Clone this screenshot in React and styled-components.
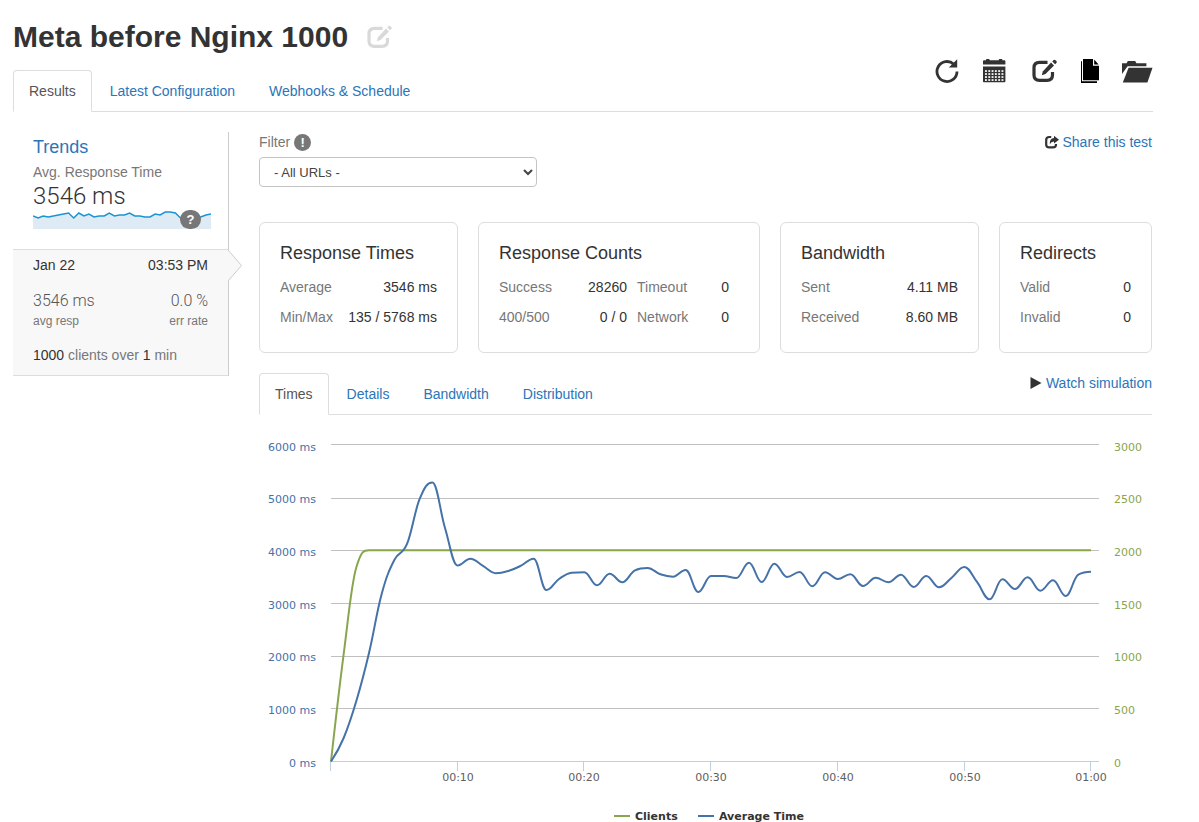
import React from "react";
import styled, { createGlobalStyle } from "styled-components";

const GlobalStyle = createGlobalStyle`
  *, *::before, *::after { box-sizing: border-box; }
  body {
    margin: 0;
    background: #fff;
    color: #333;
    font: 14px/20px "Liberation Sans", Arial, sans-serif;
  }
  h1, h2, h3, p { margin: 0; }
  svg { display: block; }
`;

const Page = styled.div`
  padding: 20px 46px 0 13px;
`;

const Header = styled.header`
  display: flex;
  justify-content: space-between;
  align-items: flex-end;
  border-bottom: 1px solid #ddd;
`;

const TitleRow = styled.div`
  display: flex;
  align-items: center;
  gap: 19px;
  margin-bottom: 17px;
`;

const Title = styled.h1`
  font-size: 30px;
  line-height: 33px;
  font-weight: 700;
`;

const IconButton = styled.button`
  display: block;
  padding: 0;
  border: 0;
  background: none;
  color: ${(p) => p.$color || "#333"};
  cursor: pointer;
`;

const Toolbar = styled.div`
  display: flex;
  gap: 23px;
  padding-bottom: 28px;
`;

const Tabs = styled.nav`
  display: flex;
  gap: 2px;
  margin-bottom: -1px;
`;

const Tab = styled.a`
  padding: 10px 15px;
  border: 1px solid ${(p) => (p.$active ? "#ddd" : "transparent")};
  border-bottom-color: ${(p) => (p.$active ? "#fff" : "transparent")};
  border-radius: 4px 4px 0 0;
  color: ${(p) => (p.$active ? "#555" : "#2b75b8")};
  background: ${(p) => (p.$active ? "#fff" : "transparent")};
  text-decoration: none;
`;

const Columns = styled.div`
  display: grid;
  grid-template-columns: 216px minmax(0, 1fr);
  gap: 30px;
  align-items: start;
  padding: 20px 1px 0 0;
`;

const Trends = styled.section`
  height: 117px;
  padding: 5px 17px 0 20px;
  border-right: 1px solid #ccc;
`;

const TrendsTitle = styled.h2`
  margin-bottom: 5px;
  font-size: 18px;
  line-height: 20px;
  font-weight: 400;
`;

const Link = styled.a`
  color: #2b75b8;
  text-decoration: none;
`;

const Muted = styled.span`
  color: #777;
`;

const Big = styled.p`
  margin: 2px 0;
  font: 300 24px/24px Roboto, "Liberation Sans", sans-serif;
`;

const Spark = styled.div`
  position: relative;
`;

const SparkBadge = styled.span`
  position: absolute;
  right: 10px;
  top: 0;
  width: 21px;
  height: 19px;
  border-radius: 10px;
  background: #777;
  color: #fff;
  font-size: 13px;
  line-height: 19px;
  font-weight: 700;
  text-align: center;
`;

const Run = styled.section`
  position: relative;
  padding: 5px 20px 10px;
  border: 1px solid #ddd;
  border-left: 0;
  border-right-color: #ccc;
  background: #f8f8f8;
`;

const RunArrow = styled.svg`
  position: absolute;
  top: 0;
  right: -14px;
`;

const Between = styled.div`
  display: flex;
  justify-content: space-between;
  margin-top: ${(p) => p.$top || 0}px;
  font-size: ${(p) => p.$size || 14}px;
  line-height: 20px;
  color: ${(p) => p.$color || "#333"};
`;

const Light = styled(Between)`
  font-family: Roboto, "Liberation Sans", sans-serif;
  font-weight: 300;
`;

const RunSummary = styled.p`
  margin-top: 14px;
  color: #777;
`;

const Strong = styled.span`
  color: #333;
`;

const FilterRow = styled.div`
  display: flex;
  justify-content: space-between;
  align-items: flex-start;
`;

const FilterLabel = styled.label`
  display: flex;
  align-items: center;
  gap: 4px;
  margin-bottom: 5px;
  color: #777;
`;

const InfoBadge = styled.span`
  width: 17px;
  height: 17px;
  border-radius: 50%;
  background: #777;
  color: #fff;
  font-size: 13px;
  line-height: 17px;
  font-weight: 700;
  text-align: center;
`;

const SelectWrap = styled.div`
  position: relative;
  width: 278px;
  svg {
    position: absolute;
    right: 4px;
    top: 12px;
    pointer-events: none;
  }
`;

const Select = styled.select`
  appearance: none;
  display: block;
  width: 100%;
  height: 30px;
  padding: 0 14px;
  border: 1px solid #c4c4c4;
  border-radius: 4px;
  background: #fff;
  color: #444;
  font: 13px "Liberation Sans", Arial, sans-serif;
`;

const IconLink = styled(Link)`
  display: flex;
  align-items: center;
  gap: 4px;
`;

const Cards = styled.div`
  display: grid;
  grid-template-columns: 199fr 282fr 199fr 153fr;
  gap: 20px;
  margin: 35px 0 20px;
`;

const Card = styled.section`
  padding: 20px;
  border: 1px solid #ddd;
  border-radius: 6px;
`;

const CardTitle = styled.h3`
  margin-bottom: 9px;
  font-size: 18px;
  line-height: 20px;
  font-weight: 400;
`;

const Stats = styled.table`
  width: 100%;
  border-collapse: collapse;
  white-space: nowrap;
`;

const StatName = styled.th`
  height: 30px;
  padding: 0;
  font-weight: 400;
  text-align: left;
  color: #777;
`;

const StatValue = styled.td`
  padding: 0 ${(p) => (p.$inset ? 10 : 0)}px 0 0;
  text-align: right;
`;

const ChartHead = styled.div`
  display: flex;
  justify-content: space-between;
  align-items: flex-start;
  border-bottom: 1px solid #ddd;
`;

const ChartSvg = styled.svg`
  width: 100%;
  height: auto;
  font-family: "DejaVu Sans", sans-serif;
  font-size: 11px;
`;

const average = [
  0, 445, 1145, 2054, 3171, 3814, 4117, 4969, 5281, 4420, 3710, 3839, 3701,
  3563, 3606, 3706, 3839, 3246, 3455, 3574, 3582, 3335, 3555, 3392, 3619, 3663,
  3544, 3498, 3625, 3209, 3512, 3512, 3474, 3763, 3398, 3744, 3493, 3587, 3317,
  3582, 3455, 3544, 3322, 3479, 3392, 3536, 3303, 3512, 3298, 3479, 3682, 3398,
  3070, 3449, 3265, 3487, 3233, 3430, 3133, 3536, 3593,
];
const clients = [0, 1017, 1838, ...Array(58).fill(2000)];

const PLOT = { left: 72, top: 29.5, bottom: 346.5, span: 760 };

function toPoints(values, max) {
  return values.map((v, i) => [
    PLOT.left + (i * PLOT.span) / (values.length - 1),
    PLOT.bottom - (v / max) * (PLOT.bottom - PLOT.top),
  ]);
}

// Cubic spline whose control points never overshoot the neighbouring values.
function spline(pts) {
  let d = `M${pts[0][0]} ${pts[0][1]}`;
  let prev = pts[0];
  for (let i = 1; i < pts.length; i++) {
    const [x, y] = pts[i];
    if (i === pts.length - 1) {
      d += `C${prev[0]} ${prev[1]} ${x} ${y} ${x} ${y}`;
      break;
    }
    const [lx, ly] = pts[i - 1];
    const [nx, ny] = pts[i + 1];
    const ax = (1.5 * x + lx) / 2.5;
    const bx = (1.5 * x + nx) / 2.5;
    let ay = (1.5 * y + ly) / 2.5;
    let by = (1.5 * y + ny) / 2.5;
    const shift = ((by - ay) * (bx - x)) / (bx - ax) + y - by;
    ay += shift;
    by += shift;
    if (ay > ly && ay > y) { ay = Math.max(ly, y); by = 2 * y - ay; }
    else if (ay < ly && ay < y) { ay = Math.min(ly, y); by = 2 * y - ay; }
    if (by > ny && by > y) { by = Math.max(ny, y); ay = 2 * y - by; }
    else if (by < ny && by < y) { by = Math.min(ny, y); ay = 2 * y - by; }
    d += `C${prev[0]} ${prev[1]} ${ax} ${ay} ${x} ${y}`;
    prev = [bx, by];
  }
  return d;
}

// Grid lines sit on half pixels so that they stay crisp.
const gridRows = [
  { line: 346.5, label: 352 },
  { line: 293.5, label: 299 },
  { line: 241.5, label: 246 },
  { line: 188.5, label: 194 },
  { line: 135.5, label: 141 },
  { line: 83.5, label: 88 },
  { line: 29.5, label: 36 },
];
const ticks = [
  ["00:10", 198.5],
  ["00:20", 324.5],
  ["00:30", 451.5],
  ["00:40", 578.5],
  ["00:50", 705.5],
  ["01:00", 831.5],
];

function TimesChart() {
  return (
    <ChartSvg viewBox="0 0 893 407" role="img" aria-label="Clients and average time">
      {gridRows.slice(1).map(({ line }) => (
        <path key={line} d={`M72 ${line}H840`} stroke="#c0c0c0" />
      ))}
      <path d="M71 346.5H840M71.5 346V356" stroke="#c0d0e0" fill="none" />
      {gridRows.map(({ label }, i) => (
        <g key={label}>
          <text x="57" y={label} textAnchor="end" fill="#4572a7">
            {i * 1000} ms
          </text>
          <text x="855" y={label} fill="#89a54e">
            {i * 500}
          </text>
        </g>
      ))}
      {ticks.map(([t, x]) => (
        <g key={t}>
          <path d={`M${x} 346V356`} stroke="#c0d0e0" />
          <text x={x + 0.5} y="366" textAnchor="middle" fill="#606060">{t}</text>
        </g>
      ))}
      <g fill="none" strokeWidth="2" strokeLinejoin="round">
        <path d={spline(toPoints(clients, 3000))} stroke="#89a54e" />
        <path d={spline(toPoints(average, 6000))} stroke="#4572a7" />
        <path d="M355 401H371" stroke="#89a54e" />
        <path d="M439 401H455" stroke="#4572a7" />
      </g>
      <g fill="#333" fontWeight="700">
        <text x="376" y="405">Clients</text>
        <text x="460" y="405">Average Time</text>
      </g>
    </ChartSvg>
  );
}

function EditIcon({ width = 26, height = 24 }) {
  return (
    <svg width={width} height={height} viewBox="0 0 26 24" fill="none">
      <path d="M15.5 3.3H7.5C4 3.3 2 5.3 2 8.7V16C2 19.4 4 21.4 7.5 21.4H15C18.5 21.4 20.5 19.4 20.5 16V13" stroke="currentColor" strokeWidth="3.2" />
      <path d="M19 3.6L22 6.6L13.5 15L9.8 16.2L10.8 12.4Z" fill="currentColor" />
      <path d="M20.3 2.4L21.7 1.1Q22.6.4 23.5 1.2L24.4 2.1Q25.2 3 24.4 3.9L23.1 5.2Z" fill="currentColor" />
    </svg>
  );
}

function RefreshIcon() {
  return (
    <svg width="25" height="24" viewBox="0 0 25 24" fill="none">
      <path d="M18.8 5.2A10 10 0 1 0 22 12.5" stroke="currentColor" strokeWidth="2.8" />
      <path d="M22.2.3V8.6H13.8Z" fill="currentColor" />
    </svg>
  );
}

function CalendarIcon() {
  const cells = [];
  for (let r = 0; r < 4; r++) for (let c = 0; c < 6; c++) cells.push([2 + c * 3.3, 11.2 + r * 3]);
  return (
    <svg width="26" height="24" viewBox="0 0 26 24">
      <path d="M0 7.5H22.4V22.5Q22.4 23.3 21.6 23.3H.8Q0 23.3 0 22.5ZM0 5.4V2.2Q0 1.2 1 1.2H3V.8Q3 0 3.8 0H5.8Q6.6 0 6.6.8V1.2H15.8V.8Q15.8 0 16.6 0H18.6Q19.4 0 19.4.8V1.2H21.4Q22.4 1.2 22.4 2.2V5.4Z" fill="currentColor" />
      {cells.map(([x, y]) => (
        <rect key={`${x}-${y}`} x={x} y={y} width="1.9" height="1.7" fill="#fff" />
      ))}
    </svg>
  );
}

function CopyIcon() {
  return (
    <svg width="18" height="24" viewBox="0 0 18 24" fill="#000">
      <path d="M2 0H12V6.8H18V21.3H2Z" />
      <path d="M13.2.4L17.6 5.6H13.2Z" />
      <path d="M0 2.2H1V22.3H16V24H0Z" />
    </svg>
  );
}

function FolderIcon() {
  return (
    <svg width="31" height="24" viewBox="0 0 31 24" fill="currentColor">
      <path d="M0 15V4.2H4.6L5.8 2H13.2L14.4 4.2H24.4V7.2H5.6Z" />
      <path d="M6.6 8.8H30.5L25.4 23.6H.8Z" />
    </svg>
  );
}

function ShareIcon() {
  return (
    <svg width="14" height="14" viewBox="0 0 14 14" fill="none">
      <path d="M6.2 2H4.2Q1.2 2 1.2 5V9.4Q1.2 12.4 4.2 12.4H8Q11 12.4 11 9.4V9" stroke="#333" strokeWidth="2.2" />
      <path d="M9 .8L14 4.7L9 8.6V6.4Q6 6.4 4.8 9.2Q4.4 3.4 9 3Z" fill="#333" />
    </svg>
  );
}

const sparkY = [
  6, 8, 6, 7, 6, 5, 4, 3, 8, 3, 6, 4, 7, 6, 6, 3, 6, 5, 5, 3, 6, 6, 7, 7, 4, 5,
  2, 2, 3, 8, 11, 9, 7, 7, 5, 4,
];

function Sparkline() {
  const line = sparkY.map((y, i) => `${((i * 178) / 35).toFixed(1)} ${y}`).join("L");
  return (
    <svg width="178" height="19" viewBox="0 0 178 19">
      <path d={`M${line}V19H0Z`} fill="#deeaf4" />
      <path d={`M${line}`} fill="none" stroke="#1c94d2" strokeWidth="1.5" />
    </svg>
  );
}

function StatCard({ title, rows, paired }) {
  return (
    <Card>
      <CardTitle>{title}</CardTitle>
      <Stats>
        {paired && (
          <colgroup>
            <col width="60" />
            <col width="78" />
            <col width="60" />
            <col width="42" />
          </colgroup>
        )}
        <tbody>
          {rows.map((row) => (
            <tr key={row[0][0]}>
              {row.map(([name, value]) => (
                <React.Fragment key={name}>
                  <StatName scope="row">{name}</StatName>
                  <StatValue $inset={paired}>{value}</StatValue>
                </React.Fragment>
              ))}
            </tr>
          ))}
        </tbody>
      </Stats>
    </Card>
  );
}

export default function App() {
  return (
    <Page>
      <GlobalStyle />
      <Header>
        <div>
          <TitleRow>
            <Title>Meta before Nginx 1000</Title>
            <IconButton $color="#d9d9d9" aria-label="Rename">
              <EditIcon />
            </IconButton>
          </TitleRow>
          <Tabs>
            <Tab href="#results" $active>Results</Tab>
            <Tab href="#config">Latest Configuration</Tab>
            <Tab href="#webhooks">Webhooks &amp; Schedule</Tab>
          </Tabs>
        </div>
        <Toolbar>
          <IconButton aria-label="Run again"><RefreshIcon /></IconButton>
          <IconButton aria-label="Schedule"><CalendarIcon /></IconButton>
          <IconButton aria-label="Edit"><EditIcon /></IconButton>
          <IconButton aria-label="Copy"><CopyIcon /></IconButton>
          <IconButton aria-label="Archive"><FolderIcon /></IconButton>
        </Toolbar>
      </Header>

      <Columns>
        <aside>
          <Trends>
            <TrendsTitle><Link href="#trends">Trends</Link></TrendsTitle>
            <Muted>Avg. Response Time</Muted>
            <Big>3546 ms</Big>
            <Spark>
              <Sparkline />
              <SparkBadge>?</SparkBadge>
            </Spark>
          </Trends>
          <Run>
            <RunArrow width="14" height="32" viewBox="0 0 14 32">
              <path d="M0 0L13.5 15.5L0 31Z" fill="#f8f8f8" />
              <path d="M0 0L13.5 15.5L0 31" fill="none" stroke="#ccc" />
            </RunArrow>
            <Between><span>Jan 22</span><span>03:53 PM</span></Between>
            <Light $top={16} $size={16} $color="#555"><span>3546 ms</span><span>0.0 %</span></Light>
            <Between $size={12} $color="#777"><span>avg resp</span><span>err rate</span></Between>
            <RunSummary><Strong>1000</Strong> clients over <Strong>1</Strong> min</RunSummary>
          </Run>
        </aside>

        <main>
          <FilterRow>
            <div>
              <FilterLabel htmlFor="url-filter">Filter <InfoBadge>!</InfoBadge></FilterLabel>
              <SelectWrap>
                <Select id="url-filter"><option>- All URLs -</option></Select>
                <svg width="10" height="7" viewBox="0 0 10 7">
                  <path d="M1 1L5 5L9 1" fill="none" stroke="#444" strokeWidth="2" />
                </svg>
              </SelectWrap>
            </div>
            <IconLink href="#share"><ShareIcon />Share this test</IconLink>
          </FilterRow>

          <Cards>
            <StatCard title="Response Times" rows={[[["Average", "3546 ms"]], [["Min/Max", "135 / 5768 ms"]]]} />
            <StatCard
              title="Response Counts"
              paired
              rows={[
                [["Success", "28260"], ["Timeout", "0"]],
                [["400/500", "0 / 0"], ["Network", "0"]],
              ]}
            />
            <StatCard title="Bandwidth" rows={[[["Sent", "4.11 MB"]], [["Received", "8.60 MB"]]]} />
            <StatCard title="Redirects" rows={[[["Valid", "0"]], [["Invalid", "0"]]]} />
          </Cards>

          <ChartHead>
            <Tabs>
              <Tab href="#times" $active>Times</Tab>
              <Tab href="#details">Details</Tab>
              <Tab href="#bandwidth">Bandwidth</Tab>
              <Tab href="#distribution">Distribution</Tab>
            </Tabs>
            <IconLink href="#simulation">
              <svg width="12" height="14" viewBox="0 0 12 14"><path d="M.5 1L11.5 7L.5 13Z" fill="#333" /></svg>
              Watch simulation
            </IconLink>
          </ChartHead>
          <TimesChart />
        </main>
      </Columns>
    </Page>
  );
}
